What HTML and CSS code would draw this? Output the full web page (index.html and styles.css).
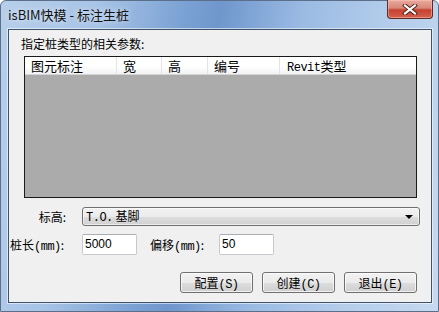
FILE: index.html
```html
<!DOCTYPE html>
<html>
<head>
<meta charset="utf-8">
<link rel="stylesheet" href="styles.css">
</head>
<body>
<div class="window">
  <div class="titlebar">
    <span class="title">isBIM快模 - 标注生桩</span>
    <div class="close">
      <svg width="16" height="11" viewBox="0 0 16 11">
        <path d="M3 1.5 L13 9.5 M13 1.5 L3 9.5" stroke="#4a1c17" stroke-width="4" stroke-linecap="square"/>
        <path d="M3 1.5 L13 9.5 M13 1.5 L3 9.5" stroke="#ffffff" stroke-width="2.2" stroke-linecap="square"/>
      </svg>
    </div>
  </div>
  <div class="client">
    <div class="caption">指定桩类型的相关参数:</div>
    <div class="listview">
      <div class="header">
        <div class="col c1">图元标注</div>
        <div class="col c2">宽</div>
        <div class="col c3">高</div>
        <div class="col c4">编号</div>
        <div class="col c5"><span class="mono">Revit</span>类型</div>
      </div>
    </div>
    <div class="row row-combo">
      <div class="lbl">标高:</div>
      <div class="combo">
        <span class="combo-text"><span class="mono">T.O.</span> 基脚</span>
        <span class="arrow"></span>
      </div>
    </div>
    <div class="row row-inputs">
      <div class="lbl">桩长<span class="mono">(mm)</span>:</div>
      <div class="input">5000</div>
      <div class="lbl2">偏移<span class="mono">(mm)</span>:</div>
      <div class="input">50</div>
    </div>
    <div class="buttons">
      <div class="btn">配置<span class="mono">(S)</span></div>
      <div class="btn">创建<span class="mono">(C)</span></div>
      <div class="btn">退出<span class="mono">(E)</span></div>
    </div>
  </div>
</div>
</body>
</html>
```

FILE: styles.css
```css
html, body {
  margin: 0;
  padding: 0;
}
body {
  width: 439px;
  height: 312px;
  overflow: hidden;
  font-family: "Noto Sans CJK SC", "DejaVu Sans", sans-serif;
  font-size: 12px;
  color: #000;
}
.window {
  width: 439px;
  height: 312px;
  box-sizing: border-box;
  background: linear-gradient(100deg, #b7cfea 0%, #a7c3e6 20%, #7aa1d3 38%, #6f97cd 45%, #9bbbe3 62%, #b4cdeb 80%, #c6d9ef 100%);
  border: 1px solid #5b6f8a;
  border-radius: 6px 6px 0 0;
  display: flex;
  flex-direction: column;
  padding: 0 6px 8px 7px;
}
.titlebar {
  height: 28px;
  display: flex;
  align-items: flex-start;
  justify-content: space-between;
  flex: none;
}
.title {
  margin-top: 5px;
  font-size: 13px;
  line-height: 17px;
  color: #111;
  text-shadow: 0 0 6px rgba(255,255,255,0.8);
}
.close {
  width: 44px;
  height: 18px;
  margin-top: -1px;
  margin-right: -1px;
  border: 1px solid #5e2a24;
  border-top: none;
  border-radius: 0 0 4px 4px;
  background: linear-gradient(#e9aaa0 0%, #d98677 45%, #c4422f 55%, #d4604c 100%);
  box-shadow: inset 0 0 0 1px rgba(255,200,190,0.5);
  display: flex;
  align-items: center;
  justify-content: center;
}
.close svg {
  display: block;
}
.client {
  flex: 1;
  background: #f0f0f0;
  border: 1px solid #40536c;
  box-shadow: 0 0 0 1px rgba(255,255,255,0.55);
  display: flex;
  flex-direction: column;
  padding-top: 7px;
}
.caption {
  margin-left: 12px;
  line-height: 14px;
  height: 14px;
  font-size: 12px;
}
.listview {
  margin-top: 5px;
  margin-left: 15px;
  width: 391px;
  height: 140px;
  border: 1px solid #1a1a1a;
  background: #ababab;
}
.header {
  display: flex;
  height: 17px;
  background: linear-gradient(#ffffff 0%, #ffffff 55%, #f1f2f4 100%);
  border-bottom: 1px solid #d5d5d5;
}
.col {
  box-sizing: border-box;
  line-height: 17px;
  padding-left: 6px;
  font-size: 13px;
  border-right: 1px solid #e3e4e6;
  white-space: nowrap;
}
.c1 { width: 92px; }
.c2 { width: 45px; }
.c3 { width: 46px; }
.c4 { width: 72px; }
.c5 { flex: 1; border-right: none; padding-left: 7px; }
.mono {
  font-family: "Liberation Mono", "DejaVu Sans Mono", monospace;
  font-size: 12px;
  letter-spacing: -0.5px;
}
.row {
  display: flex;
  align-items: center;
}
.row-combo {
  margin-top: 9px;
  height: 19px;
}
.row-inputs {
  margin-top: 8px;
  height: 21px;
}
.lbl {
  width: 73px;
  box-sizing: border-box;
  text-align: right;
  padding-right: 16px;
  white-space: nowrap;
  font-size: 12px;
}
.row-inputs .lbl {
  text-align: left;
  padding-left: 1px;
  padding-right: 0;
}
.lbl2 {
  width: 69px;
  margin-left: 13px;
  white-space: nowrap;
}
.combo {
  width: 338px;
  height: 19px;
  box-sizing: border-box;
  border: 1px solid #707070;
  border-radius: 3px;
  background: linear-gradient(#f3f3f3 0%, #ebebeb 50%, #dddddd 52%, #d0d0d0 100%);
  box-shadow: inset 0 0 0 1px rgba(255,255,255,0.6);
  display: flex;
  align-items: center;
  justify-content: space-between;
  padding: 0 6px 0 3px;
}
.combo-text {
  font-size: 12px;
  line-height: 17px;
}
.arrow {
  width: 0;
  height: 0;
  border-left: 4px solid transparent;
  border-right: 4px solid transparent;
  border-top: 4px solid #000;
}
.input {
  width: 55px;
  height: 21px;
  box-sizing: border-box;
  border: 1px solid #c6c9cf;
  border-top-color: #abadb3;
  border-radius: 2px;
  background: #fff;
  font-family: "Liberation Sans", Arial, sans-serif;
  font-size: 12px;
  line-height: 19px;
  padding-left: 2px;
}
.buttons {
  display: flex;
  justify-content: flex-end;
  gap: 9px;
  margin-top: 17px;
  padding-right: 14px;
}
.btn {
  width: 73px;
  height: 21px;
  box-sizing: border-box;
  border: 1px solid #707070;
  border-radius: 3px;
  background: linear-gradient(#f2f2f2 0%, #ebebeb 50%, #dddddd 51%, #cfcfcf 100%);
  box-shadow: inset 0 0 0 1px rgba(255,255,255,0.7);
  text-align: center;
  line-height: 19px;
  font-size: 12px;
}
```
